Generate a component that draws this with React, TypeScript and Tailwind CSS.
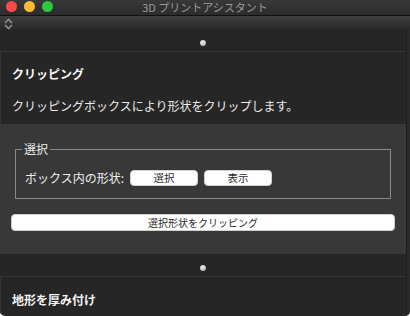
const font = { fontFamily: '"Noto Sans CJK JP", "Noto Sans", sans-serif' };

function Dot() {
  return (
    <div className="h-[6px] w-[6px] rounded-full bg-[radial-gradient(circle_at_40%_35%,#f2f2f2,#9a9a9a)]" />
  );
}

function Splitter({ height }: { height: string }) {
  return (
    <div className={`flex ${height} items-end justify-center pb-[5px]`}>
      <Dot />
    </div>
  );
}

function PushButton({ label, className }: { label: string; className?: string }) {
  return (
    <button
      className={`flex h-[16px] items-center justify-center rounded-[4px] border border-[#d0d0d0] bg-white leading-none text-[#2a2a2a] ${className ?? ""}`}
    >
      {label}
    </button>
  );
}

export default function App() {
  return (
    <div
      className="flex h-[316px] w-[410px] flex-col overflow-hidden rounded-b-[5px] bg-[#262626] text-white"
      style={font}
    >
      {/* title bar */}
      <div className="relative flex h-[16px] shrink-0 items-center justify-center border-b border-[#111] bg-[linear-gradient(#383838,#2c2c2c)]">
        <div className="absolute left-[6px] top-[1px] flex gap-[7px]">
          <span className="h-[11px] w-[11px] rounded-full bg-[#fc4a4f]" />
          <span className="h-[11px] w-[11px] rounded-full bg-[#fdbb2e]" />
          <span className="h-[11px] w-[11px] rounded-full bg-[#2bc840]" />
        </div>
        <span className="text-[11px] leading-none text-[#9c9c9c]">3D プリントアシスタント</span>
      </div>

      {/* toolbar */}
      <div className="flex h-[15px] shrink-0 items-center bg-[linear-gradient(#3e3e3e,#262626)] pl-[4px]">
        <svg width="9" height="12" viewBox="0 0 9 12" fill="none" stroke="#8e8e8e" strokeWidth="1.6">
          <path d="M1 5 L4.5 1.5 L8 5" />
          <path d="M1 7 L4.5 10.5 L8 7" />
        </svg>
      </div>

      <div className="flex flex-1">
        <div className="flex w-[406px] flex-col">
          <Splitter height="h-[20px]" />

          {/* clipping section */}
          <div className="h-[73px] shrink-0 border-t border-l border-[#343434] px-[11px] pt-[14px]">
            <div className="text-[12px] font-bold leading-[16px] text-[#f4f4f4]">クリッピング</div>
            <div className="mt-[16px] text-[12px] leading-[16px] text-[#ececec]">
              クリッピングボックスにより形状をクリップします。
            </div>
          </div>

          {/* options panel */}
          <div className="flex h-[130px] shrink-0 flex-col bg-[#383838] px-[11px] pt-[25px]">
            <div className="relative mx-[4px] h-[50px] border border-[#8a8a8a]">
              <span className="absolute left-[6px] top-[-9px] bg-[#383838] px-[2px] text-[12px] leading-[16px] text-[#ececec]">
                選択
              </span>
              <div className="flex items-center gap-[6px] pl-[9px] pt-[20px]">
                <span className="text-[12px] leading-[16px] text-[#f0f0f0]">ボックス内の形状:</span>
                <PushButton label="選択" className="w-[68px] text-[10.5px]" />
                <PushButton label="表示" className="w-[68px] text-[10.5px]" />
              </div>
            </div>
            <PushButton label="選択形状をクリッピング" className="mt-[15px] h-[17px] w-[384px] text-[10px]" />
          </div>

          <Splitter height="h-[22px]" />

          {/* thicken section */}
          <div className="flex-1 border-t border-l border-[#343434] px-[11px] pt-[15px]">
            <div className="text-[12px] font-bold leading-[16px] text-[#f4f4f4]">地形を厚み付け</div>
          </div>
        </div>
        <div className="w-[4px] border-l border-[#1f1f1f] bg-[#2a2a2a]" />
      </div>
    </div>
  );
}
